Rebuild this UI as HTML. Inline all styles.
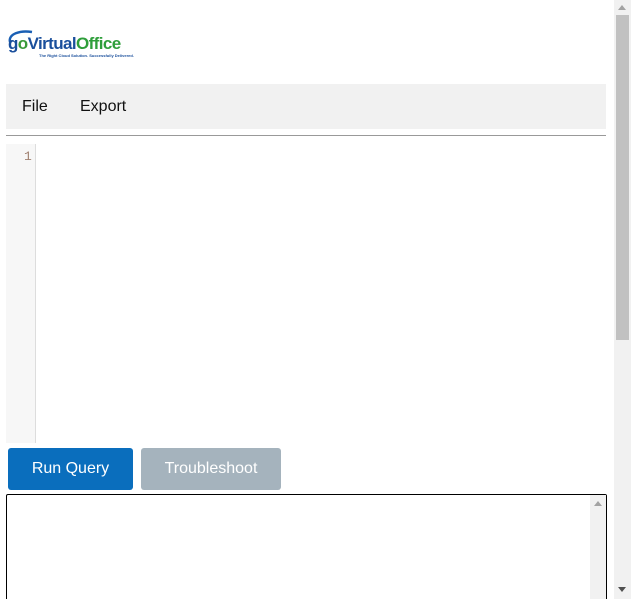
<!DOCTYPE html>
<html style="margin:0;width:631px;height:599px;overflow:hidden"><head><style>
body{margin:0;width:631px;height:599px;overflow:hidden;background:#fff;font-family:"Liberation Sans",Arial,sans-serif;position:relative}
.abs{position:absolute}
</style></head><body>
<div class="abs" style="left:6px;top:28px;width:130px;height:32px">
<svg width="40" height="20" style="position:absolute;left:0;top:0" viewBox="0 0 40 20"><path d="M4 14 C2 6 14 2 26 4" stroke="#1a5fb4" stroke-width="2.5" fill="none"/></svg>
<div class="abs" style="left:2px;top:6px;font-size:17px;font-weight:bold;color:#1a4f9c;letter-spacing:-0.6px">g<span style="color:#3a9a3a">o</span>Virtual<span style="color:#2e9e3a">Office</span></div>
<div class="abs" style="left:33px;top:25px;font-size:4px;color:#1a4f9c;font-weight:bold;white-space:nowrap">The Right Cloud Solution. Successfully Delivered.</div>
</div>
<div class="abs" style="left:6px;top:84px;width:600px;height:45px;background:#f1f1f1"></div>
<div class="abs" style="left:22px;top:98px;font-size:16px;color:#111">File</div>
<div class="abs" style="left:80px;top:98px;font-size:16px;color:#111">Export</div>
<div class="abs" style="left:6px;top:135px;width:600px;height:1px;background:#999"></div>
<div class="abs" style="left:6px;top:144px;width:29px;height:299px;background:#f7f7f7;border-right:1px solid #ddd"></div>
<div class="abs" style="left:24px;top:149px;font-size:13px;color:#a08070;font-family:'Liberation Mono',monospace">1</div>
<div class="abs" style="left:8px;top:448px;width:125px;height:42px;background:#0a6ebd;border-radius:3px;color:#fff;font-size:16px;line-height:42px;text-align:center">Run Query</div>
<div class="abs" style="left:141px;top:448px;width:140px;height:42px;background:#a5b3bd;border-radius:3px;color:#fff;font-size:16px;line-height:42px;text-align:center">Troubleshoot</div>
<div class="abs" style="left:6px;top:494px;width:599px;height:110px;border:1px solid #000;border-bottom:none;border-radius:2px 2px 0 0"></div>
<div class="abs" style="left:590px;top:495px;width:16px;height:104px;background:#f1f1f1"></div>
<div class="abs" style="left:594px;top:501px;width:0;height:0;border-left:4px solid transparent;border-right:4px solid transparent;border-bottom:5px solid #a3a3a3"></div>
<div class="abs" style="left:614px;top:0;width:17px;height:599px;background:#f1f1f1"></div>
<div class="abs" style="left:618px;top:5px;width:0;height:0;border-left:4px solid transparent;border-right:4px solid transparent;border-bottom:5px solid #a3a3a3"></div>
<div class="abs" style="left:616px;top:15px;width:13px;height:325px;background:#c1c1c1"></div>
<div class="abs" style="left:618px;top:587px;width:0;height:0;border-left:4px solid transparent;border-right:4px solid transparent;border-top:5px solid #505050"></div>
</body></html>
